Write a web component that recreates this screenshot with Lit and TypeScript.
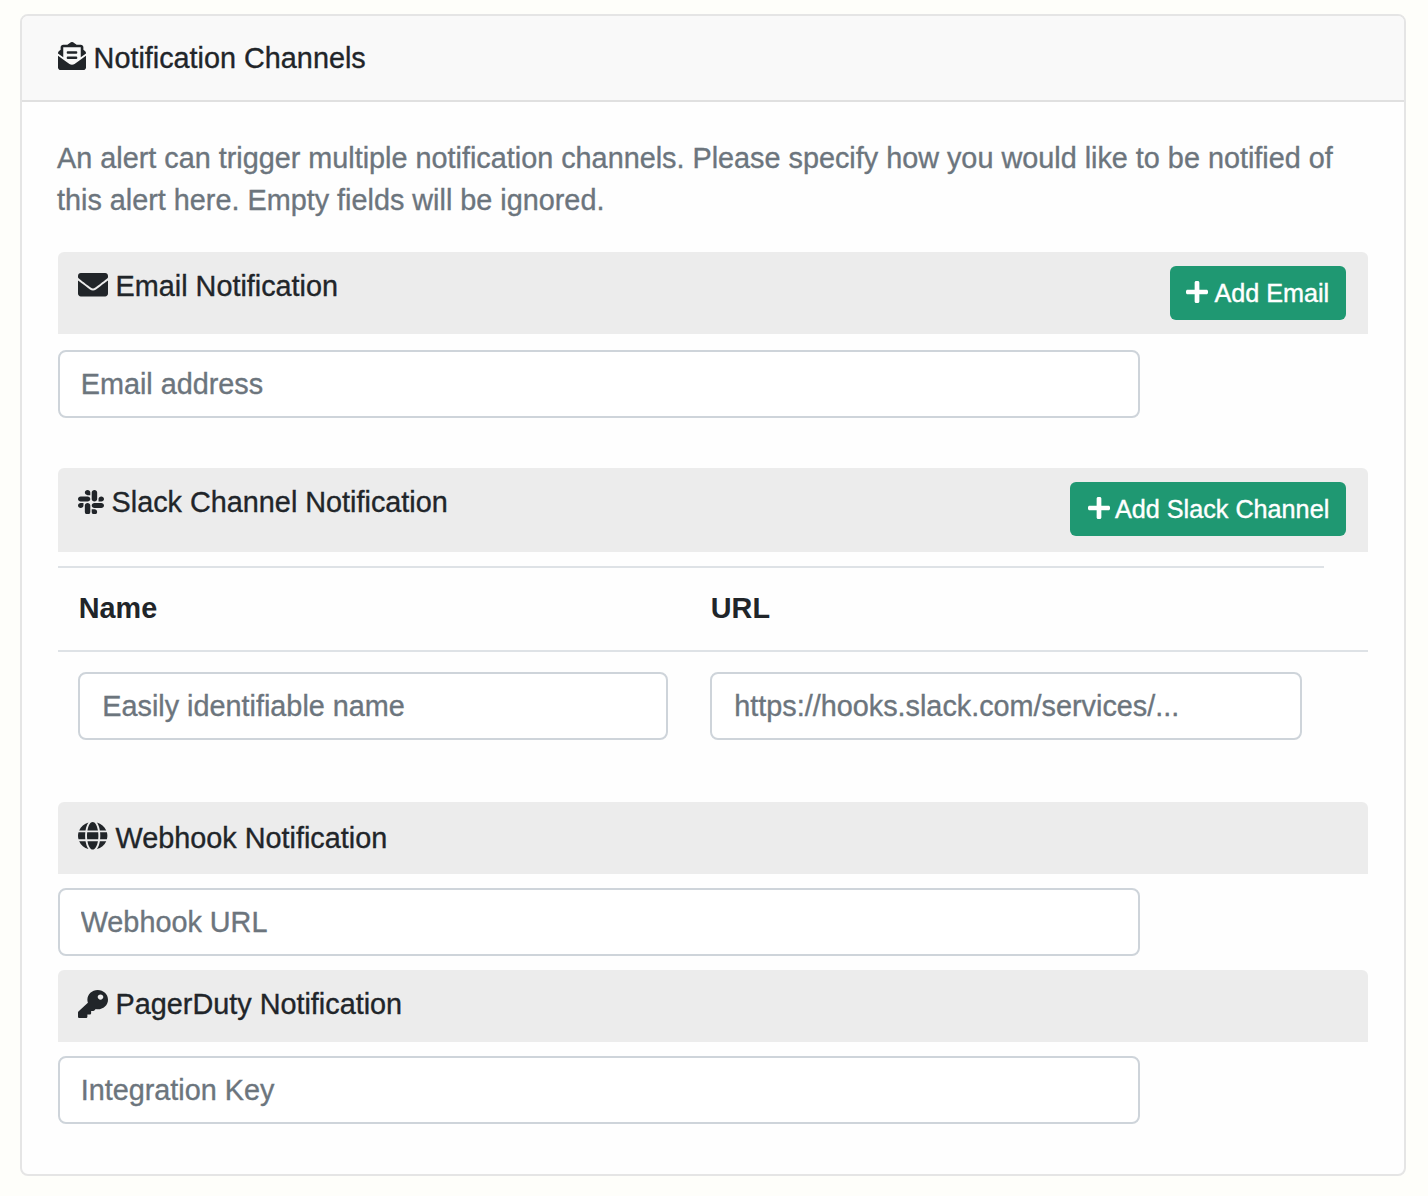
import { LitElement, html, css, svg } from "lit";
import { customElement, property } from "lit/decorators.js";

interface Glyph {
  box: string;
  path: string;
}

const GLYPHS: Record<string, Glyph> = {
  letter: {
    box: "0 0 512 512",
    path: "M176 216h160c8.84 0 16-7.16 16-16v-16c0-8.84-7.16-16-16-16H176c-8.84 0-16 7.16-16 16v16c0 8.84 7.16 16 16 16zm-16 80c0 8.84 7.16 16 16 16h160c8.84 0 16-7.16 16-16v-16c0-8.84-7.16-16-16-16H176c-8.84 0-16 7.16-16 16v16zm96 121.13c-16.42 0-32.84-5.06-46.86-15.19L0 250.86V464c0 26.51 21.49 48 48 48h416c26.51 0 48-21.49 48-48V250.86L302.86 401.94c-14.02 10.12-30.44 15.19-46.86 15.19zm237.61-254.18c-8.85-6.94-17.24-13.47-29.61-22.81V96c0-26.51-21.49-48-48-48h-77.55c-3.04-2.2-5.87-4.26-9.04-6.56C312.6 29.17 279.2-.35 256 0c-23.2-.35-56.59 29.17-73.41 41.44-3.17 2.3-6 4.36-9.04 6.56H96c-26.51 0-48 21.49-48 48v44.14c-12.37 9.33-20.76 15.87-29.61 22.81A47.995 47.995 0 0 0 0 200.72v10.65l96 69.35V96h320v184.72l96-69.35v-10.65c0-14.74-6.78-28.67-18.39-37.77z",
  },
  envelope: {
    box: "0 64 512 384",
    path: "M502.3 190.8c3.9-3.1 9.7-.2 9.7 4.7V400c0 26.5-21.5 48-48 48H48c-26.5 0-48-21.5-48-48V195.6c0-5 5.7-7.8 9.7-4.7 22.4 17.4 52.1 39.5 154.1 113.6 21.1 15.4 56.7 47.8 92.2 47.6 35.7.3 72-32.8 92.3-47.6 102-74.1 131.6-96.3 154-113.7zM256 320c23.2.4 56.6-29.2 73.4-41.4 132.7-96.3 142.8-104.7 173.4-128.7 5.8-4.5 9.2-11.5 9.2-18.9v-19c0-26.5-21.5-48-48-48H48c-26.5 0-48 21.5-48 48v19c0 7.4 3.4 14.3 9.2 18.9 30.6 23.9 40.7 32.4 173.4 128.7 16.8 12.2 50.2 41.8 73.4 41.4z",
  },
  slack: {
    box: "0 32 448 448",
    path: "M94.12 315.1c0 25.9-21.16 47.06-47.06 47.06S0 341 0 315.1c0-25.9 21.16-47.06 47.06-47.06h47.06v47.06zm23.72 0c0-25.9 21.16-47.06 47.06-47.06s47.06 21.16 47.06 47.06v117.84c0 25.9-21.16 47.06-47.06 47.06s-47.06-21.16-47.06-47.06V315.1zm47.06-188.98c-25.9 0-47.06-21.16-47.06-47.06S139 32 164.9 32s47.06 21.16 47.06 47.06v47.06H164.9zm0 23.72c25.9 0 47.06 21.16 47.06 47.06s-21.16 47.06-47.06 47.06H47.06C21.16 243.96 0 222.8 0 196.9s21.16-47.06 47.06-47.06H164.9zm188.98 47.06c0-25.9 21.16-47.06 47.06-47.06 25.9 0 47.06 21.16 47.06 47.06s-21.16 47.06-47.06 47.06h-47.06V196.9zm-23.72 0c0 25.9-21.16 47.06-47.06 47.06-25.9 0-47.06-21.16-47.06-47.06V79.06c0-25.9 21.16-47.06 47.06-47.06 25.9 0 47.06 21.16 47.06 47.06V196.9zM283.1 385.88c25.9 0 47.06 21.16 47.06 47.06 0 25.9-21.16 47.06-47.06 47.06-25.9 0-47.06-21.16-47.06-47.06v-47.06h47.06zm0-23.72c-25.9 0-47.06-21.16-47.06-47.06 0-25.9 21.16-47.06 47.06-47.06h117.84c25.9 0 47.06 21.16 47.06 47.06 0 25.9-21.16 47.06-47.06 47.06H283.1z",
  },
  globe: {
    box: "0 8 496 496",
    path: "M336.5 160C322 70.7 287.8 8 248 8s-74 62.7-88.5 152h177zM152 256c0 22.2 1.2 43.5 3.3 64h185.3c2.1-20.5 3.3-41.8 3.3-64s-1.2-43.5-3.3-64H155.3c-2.1 20.5-3.3 41.8-3.3 64zm324.7-96c-28.6-67.9-86.5-120.4-158-141.6 24.4 33.8 41.2 84.7 50 141.6h108zM177.2 18.4C105.8 39.6 47.8 92.1 19.3 160h108c8.7-56.9 25.5-107.8 49.9-141.6zM487.4 192H372.7c2.1 21 3.3 42.5 3.3 64s-1.2 43-3.3 64h114.6c5.5-20.5 8.6-41.8 8.6-64s-3.1-43.5-8.5-64zM120 256c0-21.5 1.2-43 3.3-64H8.6C3.2 212.5 0 233.8 0 256s3.2 43.5 8.6 64h114.6c-2-21-3.2-42.5-3.2-64zm39.5 96c14.5 89.3 48.7 152 88.5 152s74-62.7 88.5-152h-177zm159.3 141.6c71.4-21.2 129.4-73.7 158-141.6h-108c-8.8 56.9-25.6 107.8-50 141.6zM19.3 352c28.6 67.9 86.5 120.4 158 141.6-24.4-33.8-41.2-84.7-50-141.6h-108z",
  },
  key: {
    box: "0 0 512 512",
    path: "M512 176.001C512 273.203 433.202 352 336 352c-11.22 0-22.19-1.062-32.827-3.069l-24.012 27.014A23.999 23.999 0 0 1 261.223 384H224v40c0 13.255-10.745 24-24 24h-40v40c0 13.255-10.745 24-24 24H24c-13.255 0-24-10.745-24-24v-78.059c0-6.365 2.529-12.47 7.029-16.971l161.802-161.802C163.108 213.814 160 195.271 160 176 160 78.798 238.797.001 335.999 0 433.488-.001 512 78.511 512 176.001zM336 128c0 26.51 21.49 48 48 48s48-21.49 48-48-21.49-48-48-48-48 21.49-48 48z",
  },
  plus: {
    box: "0 32 448 448",
    path: "M416 208H272V64c0-17.67-14.33-32-32-32h-32c-17.67 0-32 14.33-32 32v144H32c-17.67 0-32 14.33-32 32v32c0 17.67 14.33 32 32 32h144v144c0 17.67 14.33 32 32 32h32c17.67 0 32-14.33 32-32V304h144c17.67 0 32-14.33 32-32v-32c0-17.67-14.33-32-32-32z",
  },
};

@customElement("ui-icon")
export class UiIcon extends LitElement {
  @property() name = "plus";

  static styles = css`
    :host {
      display: block;
      flex: none;
    }
    .glyph {
      display: block;
      width: 100%;
      height: 100%;
      fill: currentColor;
    }
  `;

  render() {
    const g = GLYPHS[this.name];
    return html`<svg class="glyph" viewBox=${g.box} preserveAspectRatio="none" aria-hidden="true">
      ${svg`<path d=${g.path}></path>`}
    </svg>`;
  }
}

@customElement("section-bar")
export class SectionBar extends LitElement {
  @property() icon = "";
  @property() label = "";
  @property() action = "";

  static styles = css`
    :host {
      display: flex;
      justify-content: space-between;
      align-items: flex-start;
      box-sizing: border-box;
      height: 72px;
      padding: 13px 22px 0 20px;
      background: #ececec;
      border-radius: 6px 6px 0 0;
    }
    .title {
      display: flex;
      align-items: flex-start;
      line-height: 42px;
      gap: 7.6px;
    }
    .envelope {
      width: 30px;
      height: 23.4px;
      margin-top: 8.3px;
    }
    .slack {
      width: 26px;
      height: 24.5px;
      margin-top: 8.8px;
    }
    .globe {
      width: 29.4px;
      height: 27.6px;
      margin: 5.3px 0.3px 0;
    }
    .key {
      width: 30px;
      height: 28px;
      margin-top: 7px;
    }
    .action {
      display: flex;
      align-items: flex-start;
      box-sizing: border-box;
      width: 176px;
      height: 54px;
      margin: 1px 0 0;
      padding: 8px 0 0 16px;
      border: 0;
      border-radius: 6px;
      background: #1f9872;
      color: #fff;
      font: inherit;
      font-size: 25.2px;
      line-height: 38px;
      white-space: nowrap;
      gap: 6.4px;
      -webkit-text-stroke: 0.4px currentColor;
    }
    .action-slack {
      width: 276px;
      padding-left: 18px;
      gap: 5px;
    }
    .plus {
      width: 22px;
      height: 22px;
      margin-top: 7px;
    }
  `;

  render() {
    return html`
      <div class="title">
        <ui-icon class=${this.icon} name=${this.icon}></ui-icon>
        <span>${this.label}</span>
      </div>
      ${this.action
        ? html`<button class="action action-${this.icon}">
            <ui-icon class="plus" name="plus"></ui-icon><span>${this.action}</span>
          </button>`
        : null}
    `;
  }
}

@customElement("app-root")
export class AppRoot extends LitElement {
  static styles = css`
    :host {
      display: block;
      box-sizing: border-box;
      height: 1196px;
      padding: 14px 22px 20px 20px;
      background: #fefefa;
      color: #212529;
      font-family: "Liberation Sans", Arial, sans-serif;
      font-size: 28.8px;
      line-height: 42px;
      -webkit-text-stroke: 0.35px currentColor;
    }
    .card {
      box-sizing: border-box;
      height: 1162px;
      border: 2px solid #e5e5e5;
      border-radius: 8px;
      background: #fefefe;
      overflow: hidden;
    }
    .head {
      display: flex;
      align-items: flex-start;
      box-sizing: border-box;
      height: 86px;
      padding: 21px 36px 0;
      gap: 7.6px;
      background: #f9f9f9;
      border-bottom: 2px solid #e0e0e0;
    }
    .letter {
      width: 28px;
      height: 28px;
      margin-top: 5px;
    }
    .body {
      display: flex;
      flex-direction: column;
      padding: 35px 36px 0;
    }
    .intro {
      margin: 0 0 31px -1px;
      color: #6c757d;
      white-space: nowrap;
    }
    .tall {
      height: 82px;
    }
    .taller {
      height: 84px;
    }
    .low {
      padding-top: 15px;
    }
    .field {
      display: block;
      box-sizing: border-box;
      width: 100%;
      height: 68px;
      margin: 0;
      padding: 0 20px;
      border: 2px solid #ced4da;
      border-radius: 8px;
      background: #fff;
      color: #495057;
      font: inherit;
      letter-spacing: inherit;
      outline: none;
    }
    .field::placeholder {
      color: #6c757d;
      opacity: 1;
      -webkit-text-stroke: 0.35px #6c757d;
    }
    .wide {
      width: 1082px;
      padding: 0 20.7px;
    }
    .email {
      margin: 16px 0 50px;
    }
    .hook {
      margin: 14px 0;
    }
    .pager {
      margin: 14px 0 0;
    }
    .channels {
      margin-top: 14px;
    }
    .names,
    .row {
      display: grid;
      grid-template-columns: 632px 634px;
    }
    .names {
      width: 1266px;
      height: 84px;
      box-sizing: border-box;
      border-top: 2px solid #dee2e6;
      font-weight: 700;
      -webkit-text-stroke: 0;
    }
    .name {
      padding: 19px 20px 0 20.8px;
    }
    .row {
      border-top: 2px solid #dee2e6;
      padding: 20px 0 62px;
    }
    .cell {
      padding: 0 22px 0 20px;
    }
    .cell .field {
      padding: 0 22.3px;
    }
  `;

  render() {
    return html`
      <div class="card">
        <div class="head">
          <ui-icon class="letter" name="letter"></ui-icon>
          <span>Notification Channels</span>
        </div>
        <div class="body">
          <p class="intro">
            An alert can trigger multiple notification channels. Please specify how you would like to be notified of<br />this
            alert here. Empty fields will be ignored.
          </p>
          <section-bar class="tall" icon="envelope" label="Email Notification" action="Add Email"></section-bar>
          <input class="field wide email" placeholder="Email address" />
          <section-bar
            class="taller"
            icon="slack"
            label="Slack Channel Notification"
            action="Add Slack Channel"
          ></section-bar>
          <div class="channels">
            <div class="names">
              <div class="name">Name</div>
              <div class="name">URL</div>
            </div>
            <div class="row">
              <div class="cell"><input class="field" placeholder="Easily identifiable name" /></div>
              <div class="cell"><input class="field" placeholder="https://hooks.slack.com/services/..." /></div>
            </div>
          </div>
          <section-bar class="low" icon="globe" label="Webhook Notification"></section-bar>
          <input class="field wide hook" placeholder="Webhook URL" />
          <section-bar icon="key" label="PagerDuty Notification"></section-bar>
          <input class="field wide pager" placeholder="Integration Key" />
        </div>
      </div>
    `;
  }
}
